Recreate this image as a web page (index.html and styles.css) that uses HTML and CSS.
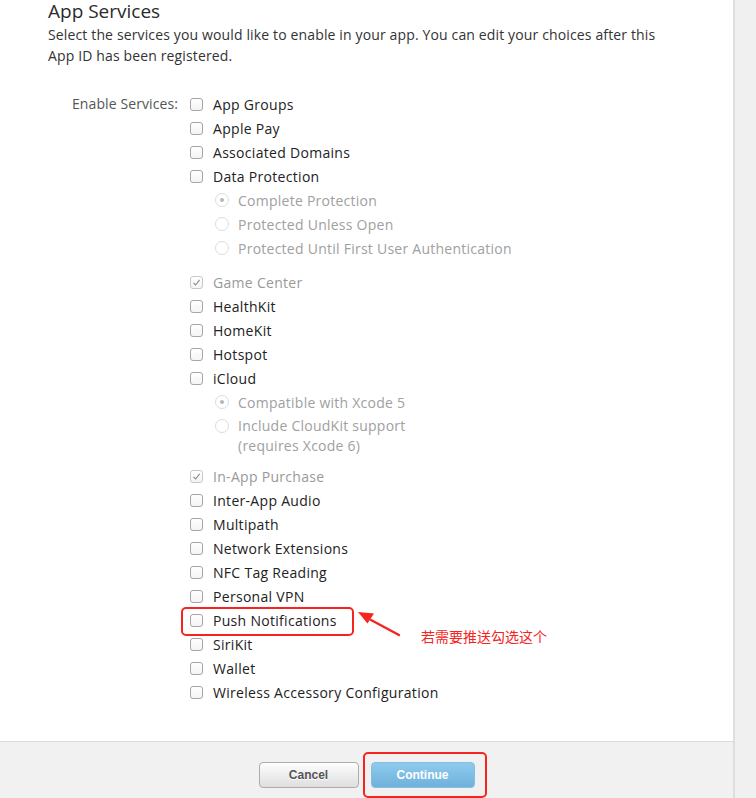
FILE: index.html
```html
<!DOCTYPE html>
<html lang="en">
<head>
  <meta charset="UTF-8" />
  <title>App Services</title>
  <link rel="stylesheet" href="styles.css">
</head>
<body>

  <div class="panel">
    <div class="intro">
      <h2>App Services</h2>
      <p>Select the services you would like to enable in your app. You can edit your choices after this App ID has been registered.</p>
    </div>

    <div class="services">
      <div class="services-label">Enable Services:</div>

      <ul class="service-list">
        <li class="row"><span class="box"></span>App Groups</li>
        <li class="row"><span class="box"></span>Apple Pay</li>
        <li class="row"><span class="box"></span>Associated Domains</li>
        <li class="row"><span class="box"></span>Data Protection</li>
        <li>
          <ul class="sub-list">
            <li class="opt"><span class="radio on"></span>Complete Protection</li>
            <li class="opt"><span class="radio"></span>Protected Unless Open</li>
            <li class="opt"><span class="radio"></span>Protected Until First User Authentication</li>
          </ul>
        </li>
        <li class="row disabled">
          <span class="box checked">
            <svg viewBox="0 0 13 13" width="13" height="13"><path d="M3.5 6.8 L5.6 9 L9.6 3.8" fill="none" stroke="#8a8a8a" stroke-width="1.1"/></svg>
          </span>Game Center
        </li>
        <li class="row"><span class="box"></span>HealthKit</li>
        <li class="row"><span class="box"></span>HomeKit</li>
        <li class="row"><span class="box"></span>Hotspot</li>
        <li class="row"><span class="box"></span>iCloud</li>
        <li>
          <ul class="sub-list">
            <li class="opt"><span class="radio on"></span>Compatible with Xcode 5</li>
            <li class="opt wrap"><span class="radio"></span><span>Include CloudKit support<br>(requires Xcode 6)</span></li>
          </ul>
        </li>
        <li class="row disabled">
          <span class="box checked">
            <svg viewBox="0 0 13 13" width="13" height="13"><path d="M3.5 6.8 L5.6 9 L9.6 3.8" fill="none" stroke="#8a8a8a" stroke-width="1.1"/></svg>
          </span>In-App Purchase
        </li>
        <li class="row"><span class="box"></span>Inter-App Audio</li>
        <li class="row"><span class="box"></span>Multipath</li>
        <li class="row"><span class="box"></span>Network Extensions</li>
        <li class="row"><span class="box"></span>NFC Tag Reading</li>
        <li class="row"><span class="box"></span>Personal VPN</li>
        <li class="row"><span class="box"></span>Push Notifications</li>
        <li class="row"><span class="box"></span>SiriKit</li>
        <li class="row"><span class="box"></span>Wallet</li>
        <li class="row"><span class="box"></span>Wireless Accessory Configuration</li>
      </ul>
    </div>

    <div class="form-footer">
      <button class="btn btn-cancel" type="button">Cancel</button>
      <button class="btn btn-continue" type="submit">Continue</button>
    </div>
  </div>

  <!-- Screenshot markup on top of the page -->
  <div class="mark mark-push"></div>
  <div class="mark mark-continue"></div>
  <svg class="mark-arrow" width="60" height="34" viewBox="0 0 60 34">
    <path d="M42 25 L14 10" stroke="#f5241e" stroke-width="2.4" stroke-linecap="round" fill="none"/>
    <path d="M1 2 L17 3.5 L10.5 13.5 Z" fill="#f5241e"/>
  </svg>
  <div class="mark-note">若需要推送勾选这个</div>

</body>
</html>
```

FILE: styles.css
```css
/* Basic Reset & Font */
* {
  box-sizing: border-box;
  margin: 0;
  padding: 0;
}

body {
  font-family: 'Open Sans', 'Liberation Sans', sans-serif;
  font-size: 13px;
  background: #f0f0f0;
  color: #333;
  height: 798px;
  overflow: hidden;
}

/* White content panel */
.panel {
  width: 735px;
  min-height: 798px;
  background: #fff;
  border-right: 2px solid #dedede;
}

/* Header */
.intro {
  padding-left: 48px;
}

.intro h2 {
  font-size: 19px;
  font-weight: normal;
  line-height: 21px;
  padding-top: 1px;
  color: #2b2b2b;
}

.intro p {
  font-size: 14px;
  line-height: 21px;
  letter-spacing: 0.14px;
  padding-top: 2px;
  max-width: 630px;
}

/* Services grid */
.services {
  display: grid;
  grid-template-columns: 180px 1fr;
  margin-top: 26px;
  padding-bottom: 37px;
  letter-spacing: 0.3px;
}

.services-label {
  text-align: right;
  padding-right: 2px;
  line-height: 24px;
  font-size: 14px;
  letter-spacing: 0.1px;
  color: #555;
}

.service-list,
.sub-list {
  list-style: none;
}

.service-list {
  padding-left: 10px;
  font-size: 14px;
  color: #222;
}

.row {
  display: flex;
  align-items: center;
  height: 24px;
}

.row.disabled {
  color: #999;
}

.box {
  width: 13px;
  height: 13px;
  border: 1px solid #a5a5a5;
  border-radius: 3px;
  background: linear-gradient(#fff, #f4f4f4);
  margin-right: 10px;
  flex-shrink: 0;
}

.box.checked {
  border-color: #c8c8c8;
}

.box.checked svg {
  display: block;
  margin: -1px;
}

/* Radio sub options */
.sub-list {
  padding-left: 25px;
  margin-bottom: 10px;
  color: #a0a0a0;
  letter-spacing: 0.25px;
}

.opt {
  display: flex;
  align-items: center;
  height: 24px;
}

.opt.wrap {
  align-items: flex-start;
  height: auto;
  line-height: 20px;
  padding-top: 2px;
  margin-bottom: -2px;
}

.opt.wrap .radio {
  margin-top: 3px;
}

.radio {
  width: 14px;
  height: 14px;
  border: 1px solid #dcdcdc;
  border-radius: 50%;
  margin-right: 9px;
  flex-shrink: 0;
  position: relative;
}

.radio.on::after {
  content: '';
  position: absolute;
  left: 4px;
  top: 4px;
  width: 4px;
  height: 4px;
  border-radius: 50%;
  background: #b5b5b5;
}

/* Footer buttons */
.form-footer {
  border-top: 1px solid #dcdcdc;
  background: #f1f1f1;
  height: 60px;
  display: flex;
  justify-content: center;
  gap: 12px;
  padding-top: 20px;
}

.btn {
  height: 26px;
  border-radius: 4px;
  font-family: 'Liberation Sans', sans-serif;
  font-size: 12px;
  font-weight: bold;
  cursor: pointer;
}

.btn-cancel {
  width: 100px;
  color: #555;
  border: 1px solid #adadad;
  background: linear-gradient(#fefefe, #dedede);
  text-shadow: 0 1px 0 #fff;
}

.btn-continue {
  width: 104px;
  color: #fff;
  border: 1px solid #86bde0;
  background: linear-gradient(#8ecbee, #6fb1db);
}

/* Red screenshot annotations */
.mark {
  position: absolute;
  border: 2px solid #f5241e;
  border-radius: 5px;
}

.mark-push {
  left: 181px;
  top: 607px;
  width: 173px;
  height: 29px;
}

.mark-continue {
  left: 363px;
  top: 752px;
  width: 124px;
  height: 46px;
}

.mark-arrow {
  position: absolute;
  left: 357px;
  top: 610px;
}

.mark-note {
  position: absolute;
  left: 421px;
  top: 626px;
  font-family: 'Noto Sans CJK SC', sans-serif;
  font-size: 14px;
  line-height: 20px;
  color: #f5241e;
}
```
